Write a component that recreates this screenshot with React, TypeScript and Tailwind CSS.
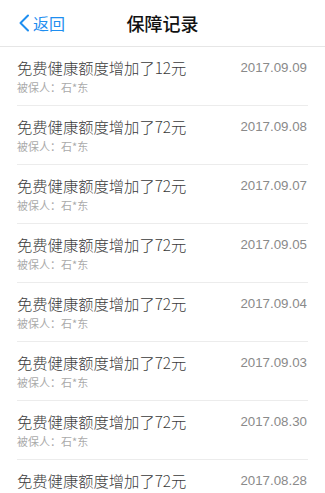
import React from "react";

const rows = [
  ["12", "2017.09.09"],
  ["72", "2017.09.08"],
  ["72", "2017.09.07"],
  ["72", "2017.09.05"],
  ["72", "2017.09.04"],
  ["72", "2017.09.03"],
  ["72", "2017.08.30"],
  ["72", "2017.08.28"],
];

export default function App() {
  return (
    <div
      className="w-[325px] h-[493px] overflow-hidden bg-white"
      style={{ fontFamily: '"Noto Sans CJK SC", "Noto Sans", sans-serif' }}
    >
      <div className="relative h-[47px] flex items-center justify-center border-b border-[#e6e6e6]">
        <div className="absolute left-[18px] top-0 h-full flex items-center text-[#1e8ef0]">
          <svg width="12" height="18" viewBox="0 0 12 18" className="mr-[3px]">
            <path d="M10 1.5 L2.5 9 L10 16.5" fill="none" stroke="#1e8ef0" strokeWidth="2" strokeLinecap="round" strokeLinejoin="round" />
          </svg>
          <span className="text-[16px] leading-none">返回</span>
        </div>
        <span className="text-[18px] font-medium text-[#111] leading-none">保障记录</span>
      </div>
      <div className="flex flex-col">
        {rows.map(([amt, date], i) => (
          <div key={i} className="px-[17px]">
            <div className="h-[59px] border-b border-[#ececec] pr-[1px] flex flex-col">
              <div className="flex items-center justify-between mt-[10px] h-[22px]">
                <span className="text-[15.3px] font-light text-[#3a3a3a] leading-none">免费健康额度增加了{amt}元</span>
                <span className="text-[13.3px] text-[#8a8a8a] leading-none" style={{ fontFamily: '"Liberation Sans", sans-serif' }}>{date}</span>
              </div>
              <div className="mt-0 text-[11px] text-[#aaa] leading-[16px]">被保人：石*东</div>
            </div>
          </div>
        ))}
      </div>
    </div>
  );
}
